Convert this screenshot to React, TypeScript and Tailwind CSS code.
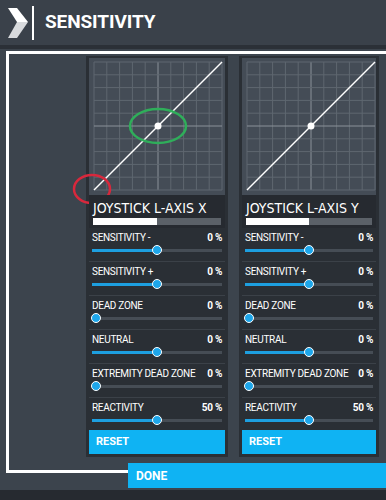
const rows = [
  { label: "SENSITIVITY -", value: "0 %", pos: 0.5 },
  { label: "SENSITIVITY +", value: "0 %", pos: 0.5 },
  { label: "DEAD ZONE", value: "0 %", pos: 0 },
  { label: "NEUTRAL", value: "0 %", pos: 0.5 },
  { label: "EXTREMITY DEAD ZONE", value: "0 %", pos: 0 },
  { label: "REACTIVITY", value: "50 %", pos: 0.5 },
];

const narrow = { fontFamily: "'Liberation Sans Narrow', 'DejaVu Sans Condensed', Roboto, sans-serif" };

function Logo() {
  return (
    <svg width="30" height="36" viewBox="0 0 30 36" className="shrink-0">
      <polygon points="1,3 10,3 21,17 10,17" fill="#ffffff" />
      <polygon points="10,17 21,17 10,33 1,33" fill="#d8dadd" />
      <rect x="25" y="1" width="2" height="34" fill="#ffffff" />
    </svg>
  );
}

function Graph({ marks, width }: { marks?: boolean; width: number }) {
  const step = 12.8;
  const lines = Array.from({ length: 11 }, (_, i) => i);
  const x0 = 5;
  const y0 = 4;
  return (
    <svg width={width} height={137} className="block overflow-visible">
      <rect x="0" y="0" width={width} height="137" fill="#444c56" />
      {lines.map((i) => (
        <line
          key={"v" + i}
          x1={x0 + i * step}
          y1={y0}
          x2={x0 + i * step}
          y2={y0 + 128}
          stroke={i === 5 ? "#8a9199" : "#5f6770"}
          strokeWidth="1"
        />
      ))}
      {lines.map((i) => (
        <line
          key={"h" + i}
          x1={x0}
          y1={y0 + i * step}
          x2={x0 + 128}
          y2={y0 + i * step}
          stroke={i === 5 ? "#8a9199" : "#5f6770"}
          strokeWidth="1"
        />
      ))}
      <line x1={x0} y1={y0 + 128} x2={x0 + 128} y2={y0} stroke="#ffffff" strokeWidth="1.5" />
      <circle cx={x0 + 64} cy={y0 + 64} r="3.5" fill="#ffffff" />
      {marks && (
        <>
          <ellipse cx={x0 + 64} cy={y0 + 64} rx="28" ry="17" fill="none" stroke="#2fae5a" strokeWidth="2.5" />
          <ellipse cx="3" cy="131" rx="18" ry="14" fill="none" stroke="#d8283c" strokeWidth="2.5" />
        </>
      )}
    </svg>
  );
}

function Slider({ pos }: { pos: number }) {
  return (
    <div className="relative h-[10px] mr-[1px]">
      <div className="absolute left-0 right-0 top-[4px] h-[3px] bg-[#464d55]" />
      <div
        className="absolute left-0 top-[4px] h-[3px] bg-[#1d9fe0]"
        style={{ width: `calc(${pos * 100}% + ${4 - pos * 8}px)` }}
      />
      <div
        className="absolute top-0 w-[10px] h-[10px] rounded-full bg-[#1da6ea] border-[1.5px] border-white -ml-[5px]"
        style={{ left: `calc(${pos * 100}% + ${4 - pos * 8}px)` }}
      />
    </div>
  );
}

function Card({ title, marks, width }: { title: string; marks?: boolean; width: number }) {
  return (
    <div className="flex flex-col bg-[#2a2f35] pt-[2px] px-[3px] pb-[3px]" style={{ width }}>
      <Graph marks={marks} width={width - 6} />
      <div className="bg-[#262a30] pt-[4px] pb-[3px] px-[4px]">
        <div className="text-[14px] leading-[19px] text-white whitespace-nowrap" style={narrow}>
          {title}
        </div>
        <div className="flex h-[7px]">
          <div className="w-1/2 bg-white" />
          <div className="flex-1 bg-[#5b6168]" />
        </div>
      </div>
      {rows.map((r, i) => (
        <div
          key={r.label}
          className={`pl-[3px] pr-[2px] pt-[3px] ${
            i < rows.length - 1 ? "h-[34px] border-b border-[#3b4148]" : "h-[32px]"
          }`}
        >
          <div className="flex justify-between text-[10px] leading-[14px] text-white whitespace-nowrap tracking-[-0.3px]">
            <span>{r.label}</span>
            <span className="font-bold pr-[1px]">{r.value}</span>
          </div>
          <Slider pos={r.pos} />
        </div>
      ))}
      <div className="h-[24px] bg-[#0fb3f3] flex items-center pl-[7px] text-[11px] font-bold text-white">
        RESET
      </div>
    </div>
  );
}

export default function App() {
  return (
    <div
      className="w-[386px] h-[500px] bg-[#3c444d] flex flex-col overflow-hidden"
      style={{ fontFamily: "Roboto, 'Liberation Sans', sans-serif" }}
    >
      <div className="h-[45px] bg-[#3a414a] flex items-center pl-[7px] gap-[8px]">
        <Logo />
        <div className="text-[19px] font-bold text-white tracking-[-0.1px]">SENSITIVITY</div>
      </div>
      <div className="h-[4px] bg-[#2b3037]" />
      <div className="mt-[2px] ml-[6px] border-l-[3px] border-t-[3px] border-b-[3px] border-white pl-[77px] pt-[2px] pb-[13px] flex gap-[11px]">
        <Card title="JOYSTICK L-AXIS X" marks width={142} />
        <Card title="JOYSTICK L-AXIS Y" width={140} />
      </div>
      <div className="ml-[128px] -mt-[10px] h-[25px] bg-[#0fb3f3] flex items-center pl-[8px] text-[12px] font-bold text-white">
        DONE
      </div>
      <div className="mt-[2px] flex-1 bg-[#262a30]" />
    </div>
  );
}
